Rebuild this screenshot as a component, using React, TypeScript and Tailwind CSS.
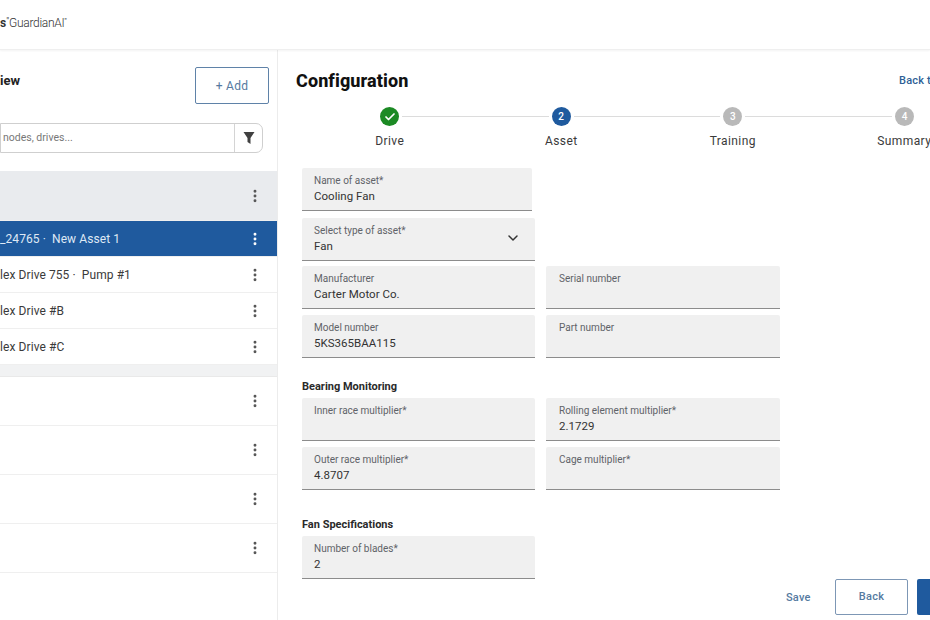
import { EllipsisVertical, ChevronDown, Check } from "lucide-react";

type FieldProps = { label: string; value?: string; width?: string; select?: boolean };

function Field({ label, value, width = "w-[233px]", select }: FieldProps) {
  return (
    <div className={`${width} h-[43px] shrink-0 bg-[#f0f0f0] border-b-[1.5px] border-[#8c8c8c] rounded-t-[2px] pt-[6px] relative ${select || !width.includes("234") ? "pl-3" : "pl-[13px]"}`}>
      <div className="text-[10px] leading-[13px] text-[#5f6368]">{label}</div>
      <div className="text-[11.5px] leading-[16px] mt-[1px] tracking-[0.03px] text-[#333]">{value}</div>
      {select && <ChevronDown className="absolute right-[14px] top-[12px] w-4 h-4 text-[#333]" strokeWidth={2.2} />}
    </div>
  );
}

function Row({ text, height, active, bg }: { text?: string; height: string; active?: boolean; bg?: string }) {
  return (
    <div
      className={`${height} flex items-center justify-between pr-[14px] border-b border-[#efefef] ${
        active ? "bg-[#1f5a9e] text-[#dfe9f5] border-[#1f5a9e]" : bg ? bg : "bg-white text-[#3a3a3a]"
      }`}
    >
      <span className="text-[12px] tracking-[0.08px] whitespace-pre">{text}</span>
      <EllipsisVertical className={`w-4 h-4 ${active ? "text-white" : "text-[#555]"}`} strokeWidth={2.4} />
    </div>
  );
}

function Step({ state, n }: { state: "done" | "active" | "todo"; n: number }) {
  const color = state === "done" ? "bg-[#1c8a24]" : state === "active" ? "bg-[#1f5a9e]" : "bg-[#b9b9b9]";
  return (
    <div className={`w-[19px] h-[19px] rounded-full shrink-0 flex items-center justify-center text-[10px] font-medium text-white ${color}`}>
      {state === "done" ? <Check className="w-3 h-3" strokeWidth={3.5} /> : n}
    </div>
  );
}

export default function App() {
  return (
    <div className="w-[930px] h-[620px] overflow-hidden bg-white flex flex-col font-['Roboto',sans-serif]">
      {/* Top bar */}
      <header className="h-[50px] shrink-0 flex items-center pb-[3px] border-b border-[#efefef] shadow-[0_1px_2px_rgba(0,0,0,0.05)] relative">
        <span className="text-[12px] font-bold text-[#333] leading-none">s</span>
        <span className="text-[9px] text-[#444] leading-none -mt-[4px]">"</span>
        <span className="text-[12px] font-light tracking-[-0.3px] text-[#333] leading-none">GuardianAI</span>
        <span className="text-[8px] text-[#444] leading-none -mt-[4px]">"</span>
      </header>

      <div className="flex flex-1 min-h-0">
        {/* Sidebar */}
        <aside className="w-[278px] shrink-0 border-r border-[#ececec]">
          <div className="h-[73px] flex justify-between pr-2 pt-[17px]">
            <span className="text-[13px] font-bold text-[#222] mt-[6px] leading-[16px]">iew</span>
            <button className="w-[74px] h-[37px] border border-[#5f82a8] rounded-[2px] text-[12px] tracking-[0.3px] text-[#557a9f]">
              + Add
            </button>
          </div>
          <div className="h-[30px] w-[263px] mb-[18px] border border-[#cfcfcf] rounded-r-[7px] flex items-center justify-between">
            <span className="text-[10.5px] text-[#777] pl-[2px]">nodes, drives...</span>
            <span className="w-[28px] h-full border-l border-[#d4d4d4] flex items-center justify-center">
              <svg viewBox="0 0 12 14" className="w-[12px] h-[14px]">
                <path d="M0.5 1h11L7.5 7v6L4.5 11V7z" fill="#404040" />
              </svg>
            </span>
          </div>
          <Row height="h-[50px]" bg="bg-[#e9ebee]" />
          <Row height="h-[36px]" active text="_24765 ·  New Asset 1" />
          <Row height="h-[36px]" text="lex Drive 755 ·  Pump #1" />
          <Row height="h-[36px]" text="lex Drive #B" />
          <Row height="h-[36px]" text="lex Drive #C" />
          <div className="h-[12px] bg-[#f1f2f3] border-b border-[#e9e9e9]" />
          <Row height="h-[49px]" />
          <Row height="h-[49px]" />
          <Row height="h-[49px]" />
          <Row height="h-[49px]" />
        </aside>

        {/* Configuration panel */}
        <main className="w-[730px] shrink-0 pl-[18px] pt-[18px]">
          <div className="flex justify-between items-center w-[703px] h-[26px]">
            <h1 className="text-[18px] font-extrabold tracking-[0.1px] text-[#111] leading-[26px]">Configuration</h1>
            <a className="w-[100px] text-[11px] font-medium tracking-[0.2px] text-[#2f5f96] whitespace-nowrap">Back to overview</a>
          </div>

          <div className="flex items-center w-[534px] ml-[84px] mt-[13px]">
            <Step state="done" n={1} />
            <div className="flex-1 h-[1.5px] bg-[#dcdcdc] mx-[3px]" />
            <Step state="active" n={2} />
            <div className="flex-1 h-[1.5px] bg-[#dcdcdc] mx-[3px]" />
            <Step state="todo" n={3} />
            <div className="flex-1 h-[1.5px] bg-[#dcdcdc] mx-[3px]" />
            <Step state="todo" n={4} />
          </div>
          <div className="grid grid-cols-[171.5px_171.5px_171.5px_171.5px] ml-[8px] mt-[6px] text-center text-[12px] leading-[18px] tracking-[0.4px] text-[#3a3a3a]">
            <span>Drive</span>
            <span>Asset</span>
            <span>Training</span>
            <span>Summary</span>
          </div>

          <div className="pl-[6px] mt-[18px]">
            <Field label="Name of asset*" value="Cooling Fan" width="w-[230px]" />
            <div className="mt-[7px]">
              <Field label="Select type of asset*" value="Fan" select />
            </div>
            <div className="grid grid-cols-[233px_234px] gap-x-[11px] gap-y-[6px] mt-[5px]">
              <Field label="Manufacturer" value="Carter Motor Co." />
              <Field label="Serial number" width="w-[234px]" />
              <Field label="Model number" value="5KS365BAA115" />
              <Field label="Part number" width="w-[234px]" />
            </div>
            <h2 className="text-[11px] font-bold text-[#2a2a2a] leading-[14px] mt-[22px] mb-[4px]">Bearing Monitoring</h2>
            <div className="grid grid-cols-[233px_234px] gap-x-[11px] gap-y-[6px]">
              <Field label="Inner race multiplier*" />
              <Field label="Rolling element multiplier*" value="2.1729" width="w-[234px]" />
              <Field label="Outer race multiplier*" value="4.8707" />
              <Field label="Cage multiplier*" width="w-[234px]" />
            </div>
            <h2 className="text-[11px] font-bold text-[#2a2a2a] leading-[14px] mt-[28px] mb-[4px]">Fan Specifications</h2>
            <Field label="Number of blades*" value="2" />
          </div>

          <div className="flex items-center ml-[490px]">
            <span className="text-[11px] font-medium tracking-[0.2px] text-[#557a9f] w-[49px] pt-[2px]">Save</span>
            <button className="w-[73px] h-[36px] border border-[#7d97b5] rounded-[2px] text-[11px] font-medium tracking-[0.3px] text-[#557a9f]">Back</button>
            <button className="w-[74px] h-[36px] ml-[9px] bg-[#1f5a9e] rounded-[2px] text-[11px] font-medium text-white">Next</button>
          </div>
        </main>
      </div>
    </div>
  );
}
